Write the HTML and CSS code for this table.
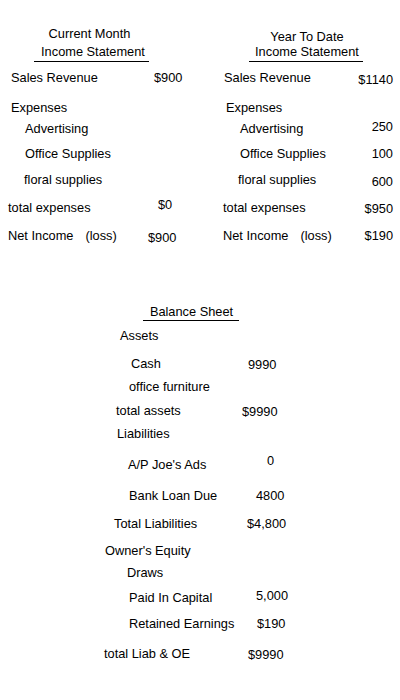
FILE: index.html
```html
<!DOCTYPE html>
<html lang="en">
<head>
<meta charset="utf-8">
<title>Income Statement and Balance Sheet</title>
<link rel="stylesheet" href="styles.css">
</head>
<body>
<main class="page">
  <section class="statements">
    <div class="stmt stmt-month">
      <div class="stmt-title">
        <div class="t1">Current Month</div>
        <div class="t2">Income Statement</div>
      </div>
      <div class="stmt-body">
        <div class="row"><span class="lab p3">Sales Revenue</span><span class="val p6">$900</span></div>
        <div class="row"><span class="lab p3">Expenses</span></div>
        <div class="row"><span class="lab p17">Advertising</span></div>
        <div class="row"><span class="lab p17">Office Supplies</span></div>
        <div class="row"><span class="lab p16">floral supplies</span></div>
        <div class="row"><span class="lab">total expenses</span><span class="val p10 up3">$0</span></div>
        <div class="row"><span class="lab">Net Income<span class="loss">(loss)</span></span><span class="val dn2">$900</span></div>
      </div>
    </div>
    <div class="stmt stmt-ytd">
      <div class="stmt-title">
        <div class="t1">Year To Date</div>
        <div class="t2">Income Statement</div>
      </div>
      <div class="stmt-body">
        <div class="row"><span class="lab p1">Sales Revenue</span><span class="val dn2">$1140</span></div>
        <div class="row"><span class="lab p3">Expenses</span></div>
        <div class="row"><span class="lab p17">Advertising</span><span class="val up2">250</span></div>
        <div class="row"><span class="lab p17">Office Supplies</span><span class="val">100</span></div>
        <div class="row"><span class="lab p15">floral supplies</span><span class="val dn2">600</span></div>
        <div class="row"><span class="lab">total expenses</span><span class="val dn1">$950</span></div>
        <div class="row"><span class="lab">Net Income<span class="loss">(loss)</span></span><span class="val">$190</span></div>
      </div>
    </div>
  </section>

  <section class="balance">
    <div class="bs-title">Balance Sheet</div>
    <div class="bs-body">
      <div class="row"><span class="lab p16">Assets</span></div>
      <div class="row"><span class="lab p27">Cash</span><span class="val p6 dn1">9990</span></div>
      <div class="row"><span class="lab p25">office furniture</span></div>
      <div class="row"><span class="lab p12">total assets</span><span class="val dn1">$9990</span></div>
      <div class="row"><span class="lab p13">Liabilities</span></div>
      <div class="row"><span class="lab p24">A/P Joe's Ads</span><span class="val p25 up4">0</span></div>
      <div class="row"><span class="lab p25">Bank Loan Due</span><span class="val p14">4800</span></div>
      <div class="row"><span class="lab p10">Total Liabilities</span><span class="val p5">$4,800</span></div>
      <div class="row"><span class="lab p1">Owner's Equity</span></div>
      <div class="row"><span class="lab p23">Draws</span></div>
      <div class="row"><span class="lab p25">Paid In Capital</span><span class="val p14 up2">5,000</span></div>
      <div class="row"><span class="lab p25">Retained Earnings</span><span class="val p15">$190</span></div>
      <div class="row"><span class="lab">total Liab &amp; OE</span><span class="val p6 dn1">$9990</span></div>
    </div>
  </section>
</main>
</body>
</html>
```

FILE: styles.css
```css
html, body {
  margin: 0;
  padding: 0;
  background: #ffffff;
}

body {
  font-family: "Liberation Sans", Arial, sans-serif;
  font-size: 12.8px;
  line-height: 15px;
  color: #000000;
}

.page {
  width: 400px;
  height: 700px;
  overflow: hidden;
}

/* ---------- income statements ---------- */
.statements {
  display: flex;
  padding-top: 25px;
}

.stmt {
  width: 200px;
  flex: none;
}

.stmt-title {
  border-bottom: 1px solid #000000;
  text-align: center;
}

.stmt-month .stmt-title {
  margin-left: 34px;
  width: 115px;
}

.stmt-ytd .stmt-title {
  margin-left: 49px;
  width: 114px;
}

.stmt-title .t1,
.stmt-title .t2 {
  line-height: 18px;
  white-space: nowrap;
}

.stmt-month .t1 {
  padding-right: 4px;
}

.stmt-month .t2 {
  padding-left: 3px;
}

.stmt-ytd .t1 {
  padding-top: 5px;
  line-height: 13px;
  padding-left: 2px;
}

.stmt-ytd .t2 {
  padding-left: 2px;
}

.stmt-body {
  display: grid;
  grid-template-rows: 30px 21px 25px 26px 28px 28px 15px;
  margin-top: 8px;
}

.stmt-month .stmt-body {
  padding-left: 8px;
}

.stmt-month .row {
  display: grid;
  grid-template-columns: 140px auto;
  align-items: start;
}

.stmt-ytd .stmt-body {
  padding-left: 23px;
  padding-right: 7px;
}

.stmt-ytd .row {
  display: flex;
  justify-content: space-between;
  align-items: flex-start;
}

.lab,
.val {
  white-space: nowrap;
}

.loss {
  margin-left: 12px;
}

/* ---------- balance sheet ---------- */
.balance {
  margin-top: 61px;
}

.bs-title {
  margin-left: 143px;
  width: 96px;
  text-align: center;
  line-height: 16px;
  border-bottom: 1px solid #000000;
  padding-left: 1px;
  box-sizing: border-box;
}

.bs-body {
  display: grid;
  grid-template-rows: 28px 23px 24px 23px 31px 31px 28px 27px 22px 25px 26px 30px 15px;
  margin-top: 7px;
  padding-left: 104px;
}

.bs-body .row {
  display: grid;
  grid-template-columns: 138px auto;
  align-items: start;
}

/* ---------- indents and nudges ---------- */
.p1 { padding-left: 1px; }
.p3 { padding-left: 3px; }
.p5 { padding-left: 5px; }
.p6 { padding-left: 6px; }
.p10 { padding-left: 10px; }
.p12 { padding-left: 12px; }
.p13 { padding-left: 13px; }
.p14 { padding-left: 14px; }
.p15 { padding-left: 15px; }
.p16 { padding-left: 16px; }
.p17 { padding-left: 17px; }
.p23 { padding-left: 23px; }
.p24 { padding-left: 24px; }
.p25 { padding-left: 25px; }
.p27 { padding-left: 27px; }

.up2 { margin-top: -2px; }
.up3 { margin-top: -3px; }
.up4 { margin-top: -4px; }
.dn1 { margin-top: 1px; }
.dn2 { margin-top: 2px; }
```
